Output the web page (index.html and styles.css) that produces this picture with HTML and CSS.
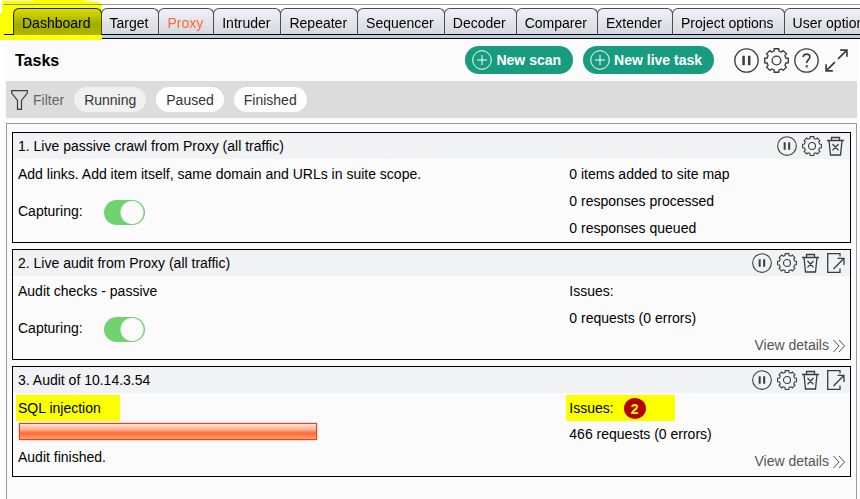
FILE: index.html
```html
<!DOCTYPE html>
<html lang="en">
<head>
  <meta charset="UTF-8" />
  <title>Dashboard</title>
  <link rel="stylesheet" href="styles.css">
</head>
<body>

  <!-- icon set -->
  <svg class="sprite" aria-hidden="true">
    <symbol id="pause" viewBox="0 0 24 24">
      <circle cx="12" cy="12" r="11.2" />
      <path class="solid" d="M8 7.5h2.4v9H8zM13.4 7.5h2.4v9h-2.4z" />
    </symbol>
    <symbol id="gear" viewBox="0 0 24 24">
      <path d="M9.6 3 9.8.7H14.2L14.4 3 16.7 3.9 18.4 2.5 21.5 5.6 20.1 7.3 21 9.6 23.3 9.8V14.2L21 14.4 20.1 16.7 21.5 18.4 18.4 21.5 16.7 20.1 14.4 21 14.2 23.3H9.8L9.6 21 7.3 20.1 5.6 21.5 2.5 18.4 3.9 16.7 3 14.4.7 14.2V9.8L3 9.6 3.9 7.3 2.5 5.6 5.6 2.5 7.3 3.9Z" />
      <circle cx="12" cy="12" r="4.2" />
    </symbol>
    <symbol id="help" viewBox="0 0 24 24">
      <circle cx="12" cy="12" r="11.2" />
      <path class="thick" d="M8.8 8.6C9 6.6 10.3 5.8 12 5.8c2 0 3.2 1.2 3.2 2.8 0 2.4-3 2.7-3 5.8" />
      <path class="solid" d="M11.2 16.6h2v2h-2z" />
    </symbol>
    <symbol id="expand" viewBox="0 0 24 24">
      <path class="thick" d="M13.500 10.500 21.500 2.500M15.500 2H22V8.500M10.500 13.500 2.500 21.500M2 15.500V22H8.500" />
    </symbol>
    <symbol id="trash" viewBox="0 0 20 20">
      <path d="M0 4.5H17M4.5 4.5V1.5H12.5V4.5M2 4.5 3.5 19H13.5L15 4.5M5.5 8l6 6.400M11.500 8l-6 6.400" />
    </symbol>
    <symbol id="popout" viewBox="0 0 20 20">
      <path d="M13 3.5V.7H.7V19.3H13V15.5M6.5 16 17 5.3M10.5 5.3H17V12" />
    </symbol>
    <symbol id="plus" viewBox="0 0 20 20">
      <circle cx="10" cy="10" r="9.3" />
      <path d="M10 5v10M5 10h10" />
    </symbol>
  </svg>

  <header class="tab-strip">
    <nav class="tabs">
      <a href="#" class="tab active">Dashboard</a>
      <a href="#" class="tab">Target</a>
      <a href="#" class="tab alert">Proxy</a>
      <a href="#" class="tab">Intruder</a>
      <a href="#" class="tab">Repeater</a>
      <a href="#" class="tab">Sequencer</a>
      <a href="#" class="tab">Decoder</a>
      <a href="#" class="tab">Comparer</a>
      <a href="#" class="tab">Extender</a>
      <a href="#" class="tab">Project options</a>
      <a href="#" class="tab">User options</a>
    </nav>
    <div class="tab-base"></div>
  </header>

  <main class="panel">
    <div class="panel-head">
      <h1>Tasks</h1>
      <button class="new-btn"><svg><use href="#plus" /></svg>New scan</button>
      <button class="new-btn"><svg><use href="#plus" /></svg>New live task</button>
      <div class="head-icons">
        <button class="icon-btn" aria-label="Pause all"><svg><use href="#pause" /></svg></button>
        <button class="icon-btn" aria-label="Settings"><svg><use href="#gear" /></svg></button>
        <button class="icon-btn" aria-label="Help"><svg><use href="#help" /></svg></button>
        <button class="icon-btn" aria-label="Expand"><svg><use href="#expand" /></svg></button>
      </div>
    </div>

    <div class="filter-bar">
      <svg class="funnel" viewBox="0 0 17 20"><path d="M.7.7H16.3V3L10.5 10.5V19.3H6.5V10.5L.7 3Z" /></svg>
      <span class="filter-label">Filter</span>
      <button class="pill off">Running</button>
      <button class="pill">Paused</button>
      <button class="pill">Finished</button>
    </div>

    <section class="task-list">
      <article class="task">
        <div class="task-head">
          <h2>1. Live passive crawl from Proxy (all traffic)</h2>
          <div class="task-icons">
            <button class="icon-btn" aria-label="Pause"><svg><use href="#pause" /></svg></button>
            <button class="icon-btn" aria-label="Settings"><svg><use href="#gear" /></svg></button>
            <button class="icon-btn" aria-label="Delete"><svg><use href="#trash" /></svg></button>
          </div>
        </div>
        <div class="task-body">
          <div class="task-info">
            <p>Add links. Add item itself, same domain and URLs in suite scope.</p>
            <div class="capture">
              <label for="capture1">Capturing:</label>
              <input type="checkbox" class="switch" id="capture1" checked>
            </div>
          </div>
          <div class="task-stats">
            <p>0 items added to site map</p>
            <p>0 responses processed</p>
            <p>0 responses queued</p>
          </div>
        </div>
      </article>

      <article class="task">
        <div class="task-head">
          <h2>2. Live audit from Proxy (all traffic)</h2>
          <div class="task-icons">
            <button class="icon-btn" aria-label="Pause"><svg><use href="#pause" /></svg></button>
            <button class="icon-btn" aria-label="Settings"><svg><use href="#gear" /></svg></button>
            <button class="icon-btn" aria-label="Delete"><svg><use href="#trash" /></svg></button>
            <button class="icon-btn" aria-label="Open"><svg><use href="#popout" /></svg></button>
          </div>
        </div>
        <div class="task-body">
          <div class="task-info">
            <p>Audit checks - passive</p>
            <div class="capture">
              <label for="capture2">Capturing:</label>
              <input type="checkbox" class="switch" id="capture2" checked>
            </div>
          </div>
          <div class="task-stats">
            <p>Issues:</p>
            <p>0 requests (0 errors)</p>
            <a href="#" class="details">View details<svg viewBox="0 0 12 14"><path d="M.5 1 6 7 .5 13M6 1l5.500 6L6 13" /></svg></a>
          </div>
        </div>
      </article>

      <article class="task">
        <div class="task-head">
          <h2>3. Audit of 10.14.3.54</h2>
          <div class="task-icons">
            <button class="icon-btn" aria-label="Pause"><svg><use href="#pause" /></svg></button>
            <button class="icon-btn" aria-label="Settings"><svg><use href="#gear" /></svg></button>
            <button class="icon-btn" aria-label="Delete"><svg><use href="#trash" /></svg></button>
            <button class="icon-btn" aria-label="Open"><svg><use href="#popout" /></svg></button>
          </div>
        </div>
        <div class="task-body">
          <div class="task-info">
            <p><label for="audit3" class="mark">SQL injection</label></p>
            <progress id="audit3" class="bar" value="100" max="100"></progress>
            <p>Audit finished.</p>
          </div>
          <div class="task-stats">
            <p><span class="mark issues">Issues: <b class="count">2</b></span></p>
            <p>466 requests (0 errors)</p>
            <a href="#" class="details">View details<svg viewBox="0 0 12 14"><path d="M.5 1 6 7 .5 13M6 1l5.500 6L6 13" /></svg></a>
          </div>
        </div>
      </article>
    </section>
  </main>

</body>
</html>
```
FILE: styles.css
```css
* {
  box-sizing: border-box;
}
body {
  margin: 0;
  padding: 4px 2px 0 4px;
  min-height: 100vh;
  display: flex;
  flex-direction: column;
  overflow-x: hidden;
  font-family: "Liberation Sans", Arial, sans-serif;
  font-size: 14px;
  color: #000;
  background: #fff;
}
h1, h2, p {
  margin: 0;
}
button {
  font: inherit;
  border: none;
  cursor: pointer;
}
svg {
  display: block;
  fill: none;
  stroke: #3c3c3c;
}
.sprite {
  position: absolute;
  width: 0;
  height: 0;
}
.solid {
  fill: #3c3c3c;
  stroke: none;
}
.thick {
  stroke-width: 1.6;
}

/* tabs */
.tab-strip {
  position: relative;
  margin-right: -2px;
  border-top: 1px solid #9a9aa6;
  isolation: isolate;
}
.tab-strip::after {
  content: "";
  position: absolute;
  left: -4px;
  top: -5px;
  width: 102px;
  height: 40px;
  background: #fbff00;
  mix-blend-mode: multiply;
  clip-path: polygon(2px 1px, 34px 1px, 34px 0, 84px 0, 84px 1px, 98px 2px, 102px 5px, 102px 40px, 0 40px, 0 13px, 2px 13px);
  pointer-events: none;
}
.tabs {
  display: flex;
  align-items: flex-start;
  padding: 3px 0 0 9px;
  overflow: hidden;
  background: linear-gradient(#05050f, #05050f) bottom / 100% 1px no-repeat #fff;
}
.tab {
  flex: none;
  height: 26px;
  margin-right: -1px;
  padding: 0 10px 0 8px;
  line-height: 28px;
  border: 1px solid #4a4a58;
  border-bottom: none;
  border-radius: 6px 6px 0 0;
  background: linear-gradient(#f0f0f4, #d8d9e0);
  color: #000;
  text-decoration: none;
}
.tab.active {
  height: 27px;
  border-color: #222;
  background: linear-gradient(#dcdede, #a4acac 60%, #b0b6b6);
}
.tab.alert {
  color: #ff6633;
}
.tab-base {
  height: 4px;
  background: linear-gradient(90deg, #fff 98px, transparent 98px), linear-gradient(#bccfdd 3px, #05050f 3px);
}

/* panel */
.panel {
  flex: 1;
  display: flex;
  flex-direction: column;
  padding: 0 1px 0 2px;
  background: #fbfbfb;
}
.panel-head {
  display: flex;
  align-items: center;
  gap: 10px;
  height: 42px;
  padding: 0 8px 0 9px;
}
.panel-head h1 {
  flex: 1;
  padding-top: 2px;
  font-size: 16px;
}
.new-btn {
  display: flex;
  align-items: center;
  gap: 4px;
  height: 28px;
  padding: 0 12px 0 7px;
  border-radius: 14px;
  background: #179c7f;
  color: #fff;
  font-weight: bold;
}
.new-btn svg {
  width: 20px;
  height: 20px;
  stroke: #fff;
}
.head-icons, .task-icons {
  display: flex;
  gap: 5px;
}
.head-icons {
  margin-left: 10px;
}
.icon-btn {
  padding: 0;
  background: none;
}
.head-icons svg {
  width: 25px;
  height: 25px;
  stroke-width: 1.3;
}
.task-icons svg {
  width: 20px;
  height: 20px;
  stroke-width: 1.3;
}

/* filter */
.filter-bar {
  display: flex;
  align-items: center;
  gap: 10px;
  height: 37px;
  padding-left: 5px;
  background: #dcdcdc;
}
.funnel {
  width: 17px;
  height: 20px;
  stroke-width: 1.2;
}
.filter-label {
  margin-left: -5px;
  color: #666;
}
.pill {
  height: 25px;
  padding: 0 10px;
  border-radius: 13px;
  background: #fff;
  color: #333;
}
.pill.off {
  background: #f0f0f0;
}

/* tasks */
.task-list {
  flex: 1;
  display: flex;
  flex-direction: column;
  gap: 6px;
  margin-top: 5px;
  padding: 8px 5px;
  border: 1px solid #9a9aa6;
  border-bottom: none;
}
.task {
  border: 1px solid #000;
}
.task-head {
  display: flex;
  align-items: center;
  justify-content: space-between;
  height: 26px;
  padding: 0 3px 0 5px;
  background: #f1f2f4;
}
.task-head h2 {
  font-size: 14px;
  font-weight: normal;
}
.task-body {
  display: grid;
  grid-template-columns: 2fr 1fr;
  padding: 2px 5px 0;
  line-height: 27px;
}
.task-stats {
  display: flex;
  flex-direction: column;
  height: 81px;
}
.capture {
  display: flex;
  align-items: center;
  gap: 21px;
  padding-top: 10px;
}
.switch {
  appearance: none;
  width: 41px;
  height: 25px;
  margin: 2px 0 0;
  border-radius: 13px;
  background: radial-gradient(circle at 28px 50%, #fbfbfb 11px, #70d36f 12px);
}
.details {
  display: flex;
  align-items: center;
  align-self: flex-end;
  gap: 4px;
  color: #555;
  text-decoration: none;
}
.details svg {
  width: 12px;
  height: 14px;
  stroke: #555;
}
.mark {
  display: block;
  width: 104px;
  height: 26px;
  margin-left: -2px;
  padding-left: 2px;
  background: #fbff00;
}
.mark.issues {
  display: flex;
  align-items: center;
  gap: 10px;
  width: 109px;
  margin-left: -3px;
  padding-left: 3px;
}
.count {
  width: 22px;
  height: 21px;
  border-radius: 50%;
  background: #b50000;
  color: #ff0;
  line-height: 22px;
  text-align: center;
}
.bar {
  appearance: none;
  display: block;
  width: 54%;
  height: 17px;
  margin: 2px 0 4px 1px;
  border: 1px solid #dd4422;
  box-shadow: 0 0 2px #ff9980;
}
.bar::-webkit-progress-bar {
  background: none;
}
.bar::-webkit-progress-value {
  background: linear-gradient(#ffe4da, #ffb595 35%, #ff6a35 60%, #ff7d4a 75%, #ffa070);
}
```
